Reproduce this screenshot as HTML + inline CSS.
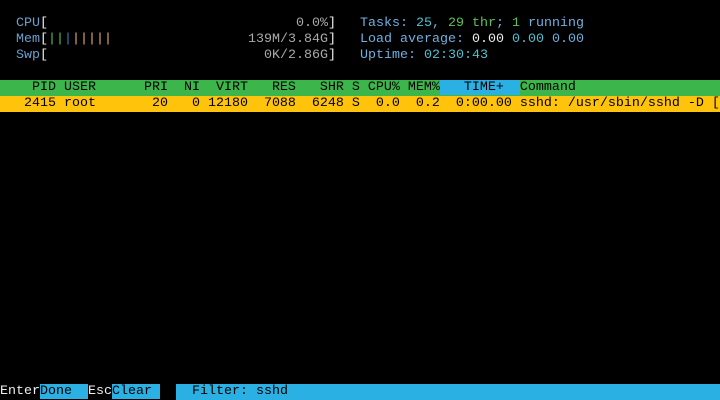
<!DOCTYPE html>
<html><head><meta charset="utf-8"><style>
html,body{margin:0;padding:0;background:#000;width:720px;height:400px;overflow:hidden}
pre{margin:0;font-family:"Liberation Mono","DejaVu Sans Mono",monospace;font-size:13.33px;line-height:16px;color:#ddd;white-space:pre;overflow:hidden;width:720px}
.l{display:block;height:16px;width:720px;overflow:hidden}
.b{color:#6a9fd0}.g{color:#aaa}.w{color:#eee}.c{color:#4fc0d0}.gr{color:#5fc05a}.bl{color:#3a7fc0}.o{color:#e8b070}.t{color:#6fb0e0}
.hdr{background:#3cb54a;color:#000}
.sel{background:#ffc30b;color:#000}
.cy{background:#2bb0e3;color:#000}
.fill{display:inline-block;width:544px;height:16px;vertical-align:top}
</style></head><body><pre><span class="l"></span><span class="l">  <span class="b">CPU</span><span class="w">[</span>                               <span class="g">0.0%</span><span class="w">]</span>   <span class="t">Tasks: </span><span class="c">25</span><span class="t">, </span><span class="gr">29</span><span class="gr"> thr</span><span class="t">; </span><span class="gr">1</span><span class="t"> running</span></span><span class="l">  <span class="b">Mem</span><span class="w">[</span><span class="gr">||</span><span class="bl">|</span><span class="o">|||||</span>                 <span class="g">139M/3.84G</span><span class="w">]</span>   <span class="t">Load average: </span><span class="w">0.00 </span><span class="c">0.00 </span><span class="t">0.00</span></span><span class="l">  <span class="b">Swp</span><span class="w">[</span>                           <span class="g">0K/2.86G</span><span class="w">]</span>   <span class="t">Uptime: </span><span class="c">02:30:43</span></span><span class="l"></span><span class="l hdr">    PID USER      PRI  NI  VIRT   RES   SHR S CPU% MEM%<span class="cy">   TIME+  </span>Command</span><span class="l sel">   2415 root       20   0 12180  7088  6248 S  0.0  0.2  0:00.00 sshd: /usr/sbin/sshd -D [</span><span class="l"></span><span class="l"></span><span class="l"></span><span class="l"></span><span class="l"></span><span class="l"></span><span class="l"></span><span class="l"></span><span class="l"></span><span class="l"></span><span class="l"></span><span class="l"></span><span class="l"></span><span class="l"></span><span class="l"></span><span class="l"></span><span class="l"></span><span class="l"><span class="w">Enter</span><span class="cy">Done  </span><span class="w">Esc</span><span class="cy">Clear </span>  <span class="cy fill">  Filter: sshd</span></span></pre></body></html>
